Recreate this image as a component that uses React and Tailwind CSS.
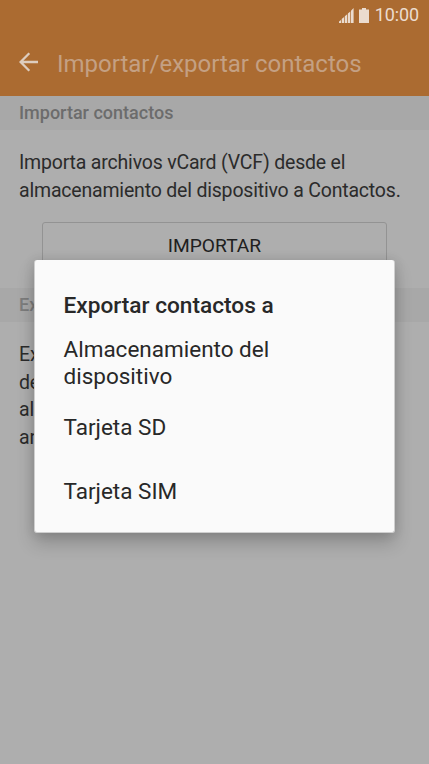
import React from "react";

const options = [
  { id: "device", label: "Almacenamiento del dispositivo", style: "h-[54px] w-[230px]" },
  { id: "sd", label: "Tarjeta SD", style: "mt-[24px] h-[27px]" },
  { id: "sim", label: "Tarjeta SIM", style: "mt-[37px] h-[27px]" },
];

const exportLines = ["Ex", "de", "al", "ar"];

const StatusBar = () => (
  <div className="flex h-[30px] items-center justify-end pr-[10px] text-[#ebdccf]">
    <svg width="15" height="15" viewBox="0 0 15 15" fill="currentColor" className="mr-[5px]">
      <path d="M0 15v-1.6L2 12v3zM2.7 15v-4l2.4-2v6zM5.8 15V8.2l2.4-2V15zM8.9 15V5.4l2.4-2V15zM12 15V2.7L14.6 0v15z" />
    </svg>
    <svg width="10" height="15" viewBox="0 0 10 15" fill="currentColor" className="mr-[6px]">
      <path d="M3 0h4v1.4h3V15H0V1.4h3z" />
    </svg>
    <span className="text-[18px] leading-[30px] tracking-[-0.1px]">10:00</span>
  </div>
);

const SectionTitle = ({ children }) => (
  <h2 className="h-[34px] bg-[#a8a8a8] pl-[19px] text-[18px] leading-[34px] font-medium text-[#6c6c6c]">
    {children}
  </h2>
);

const ExportDialog = () => (
  <div className="absolute top-[260px] left-[34px] h-[273px] w-[361px] rounded-[3px] border border-t-0 border-[#cfcfcf] bg-[#fafafa] pt-[32px] pl-[28.5px] text-[#282828] shadow-[0_10px_18px_rgba(0,0,0,0.2),0_0_12px_rgba(0,0,0,0.12)]">
    <h3 className="h-[27px] text-[22.65px] leading-[27px] font-medium">
      Exportar contactos a
    </h3>
    <ul className="mt-[17px] text-[22.5px] leading-[27px]">
      {options.map((option) => (
        <li key={option.id} className={option.style}>
          {option.label}
        </li>
      ))}
    </ul>
  </div>
);

const App = () => {
  return (
    <div className="relative h-[764px] w-[429px] overflow-hidden bg-[#aeaeae] font-['Roboto',sans-serif] text-[#2b2b2b]">
      <header className="h-[96px] bg-[#ab6b31]">
        <StatusBar />
        <div className="flex h-[66px] items-center pl-[19px]">
          <svg
            width="20"
            height="20"
            viewBox="0 0 20 20"
            fill="none"
            stroke="#ddcdbf"
            strokeWidth="2.3"
            className="mr-[18px] -mt-[2px]"
          >
            <path d="M19 10H2M10.3 1.3L1.6 10l8.7 8.7" />
          </svg>
          <h1 className="pt-px text-[24px] text-[#c4a083]">Importar/exportar contactos</h1>
        </div>
      </header>

      <SectionTitle>Importar contactos</SectionTitle>
      <p className="mt-[19px] h-[55px] pl-[19px] text-[19.5px] leading-[27.5px] tracking-[-0.19px] whitespace-nowrap">
        Importa archivos vCard (VCF) desde el
        <br />
        almacenamiento del dispositivo a Contactos.
      </p>
      <button className="mt-[18px] ml-[42px] block h-[46px] w-[345px] rounded-[3px] border border-[#939393] pt-[2px] text-[19.2px] text-[#202020]">
        IMPORTAR
      </button>

      <div className="mt-[20px]">
        <SectionTitle>
          <span className="text-[#7c7c7c]">Ex</span>
        </SectionTitle>
      </div>
      <p className="mt-[19px] pl-[19px] text-[19.5px] leading-[27.5px] tracking-[-0.19px]">
        {exportLines.map((line) => (
          <span key={line} className="block">
            {line}
          </span>
        ))}
      </p>

      <ExportDialog />
    </div>
  );
};

export default App;
